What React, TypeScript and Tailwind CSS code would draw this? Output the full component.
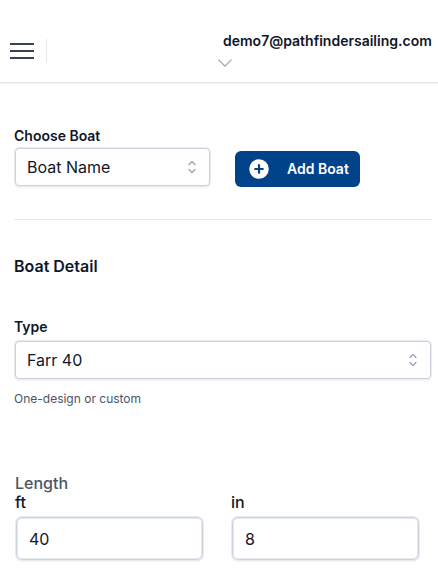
import React, { useState } from "react";

interface SelectBoxProps {
  label: string;
  value: string;
  className?: string;
  boxClassName?: string;
}

const SelectBox: React.FC<SelectBoxProps> = ({ label, value, className = "", boxClassName = "mt-0.5" }) => (
  <div className={className}>
    <label className="block text-sm leading-5 font-semibold text-[#0f172a]">{label}</label>
    <button
      type="button"
      className={`ml-px flex h-[38px] w-[calc(100%-2px)] items-center justify-between rounded-[4px] border border-[#ccd1dd] bg-white pl-[11px] pr-2 text-left shadow-[0_0_0_1px_#e9ecf3,0_2px_2px_#0000000d] ${boxClassName}`}
    >
      <span className="text-base leading-6 text-[#0f172a]">{value}</span>
      <svg className="size-[18px] text-gray-400" viewBox="0 0 20 20" fill="currentColor">
        <path
          fillRule="evenodd"
          clipRule="evenodd"
          d="M10 3a.75.75 0 01.55.24l3.25 3.5a.75.75 0 11-1.1 1.02L10 4.852 7.3 7.76a.75.75 0 01-1.1-1.02l3.25-3.5A.75.75 0 0110 3zm-3.76 9.2a.75.75 0 011.06.04l2.7 2.908 2.7-2.908a.75.75 0 111.1 1.02l-3.25 3.5a.75.75 0 01-1.1 0l-3.25-3.5a.75.75 0 01.04-1.06z"
        />
      </svg>
    </button>
  </div>
);

interface NumberFieldProps {
  label: string;
  initial: string;
}

const NumberField: React.FC<NumberFieldProps> = ({ label, initial }) => {
  const [value, setValue] = useState(initial);

  return (
    <div className="w-[188px]">
      <label className="block text-base leading-5 font-medium text-[#0f172a]">{label}</label>
      <input
        value={value}
        onChange={(e) => setValue(e.target.value)}
        className="mt-[5px] ml-px block h-[43px] w-[187px] rounded-md border border-[#ced4df] bg-white px-3 text-base text-[#0f172a] shadow-[0_0_0_1px_#e6eaf1,inset_0_0_0_1px_#e6eaf1,0_2px_2px_#0000000d] outline-none"
      />
    </div>
  );
};

const Header = () => (
  <header className="flex h-[83px] items-center border-b border-gray-200 pl-2.5 pr-1.5 pt-5 shadow-xs">
    <button type="button" aria-label="Open sidebar" className="flex w-6 flex-col gap-[5px]">
      <span className="h-0.5 bg-gray-700" />
      <span className="h-0.5 bg-gray-700" />
      <span className="h-0.5 bg-gray-700" />
    </button>
    <div className="ml-3 h-6 w-px bg-gray-900/10" />
    <button type="button" className="mb-1.5 ml-auto flex w-[214px] flex-col items-start">
      <span className="ml-[5px] text-sm leading-6 font-semibold text-[#0f172a]">
        demo7@pathfindersailing.com
      </span>
      <svg className="mt-1.5 h-2 w-3.5 text-gray-400" viewBox="0 0 14 8" fill="none" stroke="currentColor" strokeWidth="1.2">
        <path d="M.5.6 7 7.1 13.5.6" />
      </svg>
    </button>
  </header>
);

export default function App() {
  return (
    <div className="h-[586px] overflow-hidden bg-white font-['Inter',sans-serif]">
      <Header />
      <main className="pl-3.5 pr-1.5">
        <section className="flex items-start border-b border-gray-200 pt-[43px] pb-8">
          <SelectBox label="Choose Boat" value="Boat Name" className="w-[197px]" />
          <button
            type="button"
            className="mt-[25px] ml-6 flex h-9 w-[125px] items-center rounded-md bg-[#00438a] pl-3.5 text-sm font-semibold text-white"
          >
            <svg className="mr-[18px] size-5" viewBox="0 0 20 20">
              <circle cx="10" cy="10" r="9.75" fill="#fff" />
              <path d="M10 6.2v7.6M6.2 10h7.6" stroke="#00438a" strokeWidth="2.2" strokeLinecap="round" />
            </svg>
            Add Boat
          </button>
        </section>

        <h2 className="mt-[34px] text-base leading-6 font-semibold text-[#0f172a]">Boat Detail</h2>
        <SelectBox label="Type" value="Farr 40" className="mt-[39px]" boxClassName="mt-1" />
        <p className="mt-3 text-xs leading-4 text-gray-600">One-design or custom</p>

        <section className="mt-[67px] pl-px">
          <h3 className="text-base leading-[18px] font-medium text-gray-600">Length</h3>
          <div className="flex gap-7">
            <NumberField label="ft" initial="40" />
            <NumberField label="in" initial="8" />
          </div>
        </section>
      </main>
    </div>
  );
}
